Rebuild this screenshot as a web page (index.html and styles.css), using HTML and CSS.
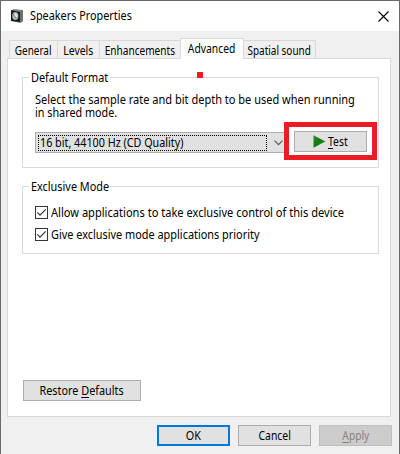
FILE: index.html
```
<!DOCTYPE html>
<html lang="en">
<head>
<meta charset="utf-8">
<title>Speakers Properties</title>
<link rel="stylesheet" href="styles.css">
</head>
<body>
<main class="window">
  <header class="titlebar">
    <svg class="speaker" width="13" height="14" viewBox="0 0 13 14">
      <path d="M1 1 3 0 12 1V12L9 14 1 12Z" fill="#85898e"/>
      <path d="M9 2 12 1V12L9 14Z" fill="#6c7075"/>
      <path d="M0 1 9 3V13L0 12Z" fill="#17191b"/>
      <ellipse cx="4.3" cy="7" rx="3.1" ry="3.9" fill="#a9b3b6"/>
      <ellipse cx="4.7" cy="6.7" rx="1.7" ry="2.3" fill="#dce3e4"/>
      <path d="M2 5 5 9" stroke="#727b80"/>
    </svg>
    <h1 class="title"><span class="t-title">Speakers Properties</span></h1>
    <svg class="close" width="11" height="11" viewBox="0 0 11 11"><path d="M.5.5 10.5 10.5M10.5.5.5 10.5" stroke="#000" stroke-width="1.1"/></svg>
  </header>
  <nav class="tabs">
    <div class="tab general"><span class="t-general">General</span></div>
    <div class="tab levels"><span class="t-levels">Levels</span></div>
    <div class="tab enhancements"><span class="t-enh">Enhancements</span></div>
    <div class="tab active"><span class="t-adv">Advanced</span></div>
    <div class="tab spatial"><span class="t-spatial">Spatial sound</span></div>
  </nav>
  <section class="panel">
    <div class="group format">
      <h2 class="legend"><span class="t-format">Default Format</span></h2>
      <i class="dot"></i>
      <p class="description"><span class="t-select">Select the sample rate and bit depth to be used when running</span><br><span class="t-shared">in shared mode.</span></p>
      <div class="row">
        <div class="combo">
          <div class="focus"><span class="t-bit">16 bit, 44100 Hz (CD Quality)</span></div>
          <svg class="chevron" width="9" height="6" viewBox="0 0 9 6"><path d="M.5.7 4.5 4.7 8.5.7" fill="none" stroke="#555" stroke-width="1.1"/></svg>
        </div>
        <div class="button test">
          <svg width="13" height="13" viewBox="0 0 13 13"><defs><linearGradient id="play" x2="1" y2="1"><stop stop-color="#2c902c"/><stop offset=".5" stop-color="#137813"/><stop offset="1" stop-color="#4aab43"/></linearGradient></defs><path d="M.5.3 12.5 6.5.5 12.7Z" fill="url(#play)"/></svg>
          <span class="t-test"><u>T</u>est</span>
          <i class="highlight"></i>
        </div>
      </div>
    </div>
    <div class="group exclusive">
      <h2 class="legend"><span class="t-excl">Exclusive Mode</span></h2>
      <div class="check"><svg width="13" height="13" viewBox="0 0 13 13"><rect x=".5" y=".5" width="12" height="12" fill="#fff" stroke="#333"/><path d="M2.3 6.4 5 9.1 10.7 3.4" fill="none" stroke="#333" stroke-width="1.2"/></svg><span class="t-allow">Allow applications to take exclusive control of this device</span></div>
      <div class="check"><svg width="13" height="13" viewBox="0 0 13 13"><rect x=".5" y=".5" width="12" height="12" fill="#fff" stroke="#333"/><path d="M2.3 6.4 5 9.1 10.7 3.4" fill="none" stroke="#333" stroke-width="1.2"/></svg><span class="t-give">Give exclusive mode applications priority</span></div>
    </div>
    <div class="button restore"><span class="t-restore">Restore <u>D</u>efaults</span></div>
  </section>
  <footer class="actions">
    <div class="button default"><span class="t-ok">OK</span></div>
    <div class="button"><span class="t-cancel">Cancel</span></div>
    <div class="button disabled"><span class="t-apply"><u>A</u>pply</span></div>
  </footer>
</main>
</body>
</html>
```
FILE: styles.css
```
* { box-sizing: border-box; }
body { margin: 0; font: 12px/14px "Noto Sans", "Open Sans", sans-serif; color: #000; }
h1, h2, p { margin: 0; font-size: inherit; font-weight: 400; }
svg { display: block; flex: none; }
span { display: inline-block; vertical-align: top; white-space: nowrap; transform-origin: left center; }
u { text-underline-offset: 2px; text-decoration-thickness: 1px; text-decoration-skip-ink: none; }

.window { width: 400px; height: 454px; background: #f0f0f0; border: 1px solid #6b696b; border-bottom: 0; overflow: hidden; }
.titlebar { display: flex; align-items: center; height: 30px; padding: 0 10px; background: #fff; }
.title { flex: 1; margin-left: 6px; }

.tabs { display: flex; align-items: flex-end; height: 27px; padding-left: 8px; position: relative; z-index: 1; }
.tab { display: flex; justify-content: center; height: 19px; margin-bottom: -1px; padding-top: 3px; border: 1px solid #d9d9d9; background: #f0f0f0; }
.tab span, .button span { transform-origin: center; }
.general { width: 49px; }
.levels { width: 43px; margin-left: -1px; }
.enhancements { width: 82px; margin-left: -1px; }
.active { width: 64px; height: 21px; margin-left: -1px; background: #fff; border-bottom-color: #fff; }
.spatial { width: 73px; margin-left: -1px; }

.panel { width: 384px; height: 359px; margin-left: 6px; padding: 18px 14px; border: 1px solid #d9d9d9; background: #fff; }
.group { position: relative; width: 357px; border: 1px solid #dcdcdc; }
.format { height: 91px; padding: 15px 0 0 12px; }
.exclusive { height: 68px; margin-top: 18px; padding: 19px 0 0 12px; }
.legend { position: absolute; left: 6px; top: -7px; width: 81px; height: 14px; padding: 0 2px; background: #fff; }
.dot { position: absolute; left: 174px; top: -6px; width: 6px; height: 6px; background: #ed1c24; }
.description { line-height: 13px; }
.row { display: flex; margin-top: 12px; }
.combo { display: flex; align-items: center; width: 251px; height: 21px; margin-top: 1px; padding-left: 2px; border: 1px solid #adadad; background: #e1e1e1; }
.focus { width: 229px; height: 16px; padding-left: 1px; border: 1px dotted #000; }
.chevron { margin-left: 7px; }
.button { display: flex; align-items: center; justify-content: center; width: 73px; height: 21px; border: 1px solid #adadad; background: #e1e1e1; }
.test { position: relative; justify-content: flex-start; gap: 2px; margin-left: 8px; padding-left: 18px; }
.test span { transform-origin: left center; }
.highlight { position: absolute; left: -11px; top: -10px; width: 93px; height: 38px; border: 5px solid #ed1c24; }
.check { display: flex; align-items: center; height: 13px; gap: 3px; margin-bottom: 9px; }
.restore { width: 118px; margin: 126px 0 0 1px; }
.actions { display: flex; justify-content: flex-end; gap: 8px; padding: 8px 7px 0 0; }
.default { border: 2px solid #0078d7; }
.disabled { color: #838383; background: #ccc; border-color: #bfbfbf; }

/* Condensed lettering */
.t-title { transform: scaleX(.903); }
.t-general, .t-spatial { transform: scaleX(.83); }
.t-levels { transform: scaleX(.87); }
.t-enh { transform: scaleX(.84); }
.t-adv { transform: scaleX(.86); }
.t-format, .t-excl { transform: scaleX(.907); }
.t-select { transform: scaleX(.918); }
.t-shared { transform: scaleX(.9); }
.t-bit { transform: scaleX(.897); }
.t-test { transform: scaleX(.865); }
.t-allow { transform: scaleX(.924); }
.t-give { transform: scaleX(.908); }
.t-restore { transform: scaleX(.903); }
.t-ok { transform: scaleX(.9); }
.t-cancel { transform: scaleX(.865); }
.t-apply { transform: scaleX(.85); }
```
